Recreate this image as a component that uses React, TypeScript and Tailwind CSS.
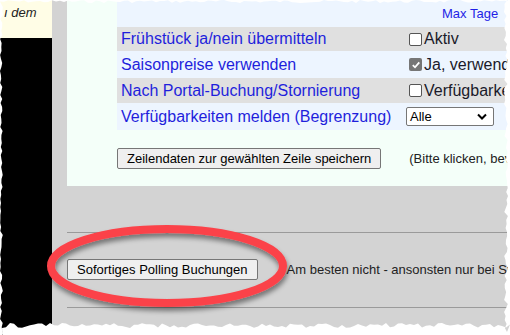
import React from "react";

// jagged "torn paper" edge, deterministic
function tornPath() {
  let seed = 7;
  const rnd = () => {
    seed = (seed * 9301 + 49297) % 233280;
    return seed / 233280;
  };
  const pts: string[] = [];
  // top edge
  for (let x = 0; x <= 510; x += 4) pts.push(`${x},${(rnd() * 3).toFixed(1)}`);
  // right edge
  for (let y = 0; y <= 335; y += 4) pts.push(`${(504 + rnd() * 4).toFixed(1)},${y}`);
  // bottom edge
  for (let x = 510; x >= 0; x -= 4) pts.push(`${x},${(323 + rnd() * 5).toFixed(1)}`);
  // left edge
  for (let y = 335; y >= 0; y -= 4) pts.push(`${(rnd() * 3).toFixed(1)},${y}`);
  return `M-5,-5 H515 V340 H-5 Z M${pts.join(" L")} Z`;
}

const rows = [
  { label: "Frühstück ja/nein übermitteln", kind: "check", text: "Aktiv", checked: false, h: "h-[24px]", bg: "bg-[#e0e0e0]" },
  { label: "Saisonpreise verwenden", kind: "check", text: "Ja, verwenden", checked: true, h: "h-[27px]", bg: "bg-[#edf5ff]" },
  { label: "Nach Portal-Buchung/Stornierung", kind: "check", text: "Verfügbarkeiten", checked: false, h: "h-[25px]", bg: "bg-[#e0e0e0]" },
  { label: "Verfügbarkeiten melden (Begrenzung)", kind: "select", text: "Alle", checked: false, h: "h-[27px]", bg: "bg-[#edf5ff]" },
];

export default function App() {
  return (
    <div className="relative w-[510px] h-[335px] bg-white overflow-hidden font-['Liberation_Sans',Arial,sans-serif]">
      <div className="flex w-[510px] h-[335px]">
        {/* left strip */}
        <div className="w-[52px] flex flex-col">
          <div className="h-[38px] bg-[#fffde6] pt-[3px] pl-[4px] text-[13px] italic text-[#222] whitespace-nowrap overflow-hidden">
            ı dem
          </div>
          <div className="flex-1 bg-black" />
        </div>
        <div className="w-[15px] bg-[#d3d3d3]" />

        {/* main column */}
        <div className="flex-1 flex flex-col bg-[#d3d3d3] overflow-hidden">
          <div className="h-[186px] bg-[#f4fff9] pl-[50px]">
            <div className="w-[420px]">
              <div className="h-[27px] bg-[#edf5ff] flex items-center pl-[325px] pt-[1px]">
                <span className="text-[13px] text-[#1f1fe6] whitespace-nowrap">Max Tage</span>
              </div>
              {rows.map((r) => (
                <div key={r.label} className={`${r.h} ${r.bg} flex items-center`}>
                  <div className="w-[292px] pl-[4px] text-[16px] text-[#1f1fdc] whitespace-nowrap">
                    {r.label}
                  </div>
                  {r.kind === "check" ? (
                    <div className="flex items-center gap-[2px] whitespace-nowrap">
                      {r.checked ? (
                        <span className="w-[13px] h-[13px] rounded-[2px] bg-[#767676] flex items-center justify-center">
                          <svg width="10" height="10" viewBox="0 0 10 10">
                            <path d="M1.8 5.2 L4 7.3 L8.3 2.4" fill="none" stroke="white" strokeWidth="1.8" />
                          </svg>
                        </span>
                      ) : (
                        <span className="w-[13px] h-[13px] rounded-[2px] border border-[#555] bg-white" />
                      )}
                      <span className="text-[16px] text-[#1a1a2a]">{r.text}</span>
                    </div>
                  ) : (
                    <div className="ml-[-3px] w-[88px] h-[19px] border border-[#767676] rounded-[2px] bg-white flex items-center justify-between pl-[3px] pr-[6px]">
                      <span className="text-[13px] text-black">{r.text}</span>
                      <svg width="10" height="7" viewBox="0 0 10 7">
                        <path d="M1 1.5 L5 5.5 L9 1.5" fill="none" stroke="black" strokeWidth="2" />
                      </svg>
                    </div>
                  )}
                </div>
              ))}
              <div className="flex items-center mt-[18px]">
                <button className="h-[21px] px-[9px] bg-[#efefef] border border-[#767676] rounded-[2px] text-[13px] text-black whitespace-nowrap">
                  Zeilendaten zur gewählten Zeile speichern
                </button>
                <span className="ml-[28px] text-[13px] text-[#222] whitespace-nowrap">
                  (Bitte klicken, bevor Sie eine andere Zeile wählen)
                </span>
              </div>
            </div>
          </div>

          <div className="mt-[46px] h-px bg-[#9a9a9a] mr-[2px]" />
          <div className="flex items-center mt-[26px]">
            <button className="h-[21px] px-[9px] bg-[#efefef] border border-[#767676] rounded-[2px] text-[13px] text-black whitespace-nowrap">
              Sofortiges Polling Buchungen
            </button>
            <span className="ml-[29px] text-[13px] text-[#222] whitespace-nowrap">
              Am besten nicht - ansonsten nur bei Störungen
            </span>
          </div>
          <div className="mt-[27px] h-px bg-[#9a9a9a] mr-[2px]" />
        </div>
      </div>

      {/* red highlight ellipse */}
      <svg className="absolute left-0 top-0" width="510" height="335">
        <defs>
          <filter id="sh" x="-20%" y="-40%" width="140%" height="180%">
            <feDropShadow dx="1" dy="4" stdDeviation="2.5" floodColor="#000" floodOpacity="0.45" />
          </filter>
        </defs>
        <ellipse cx="167" cy="266" rx="116" ry="37" fill="none" stroke="#fb434a" strokeWidth="8" filter="url(#sh)" />
      </svg>

      {/* torn edge */}
      <svg className="absolute left-0 top-0" width="510" height="335">
        <path d={tornPath()} fill="white" fillRule="evenodd" />
      </svg>
    </div>
  );
}
